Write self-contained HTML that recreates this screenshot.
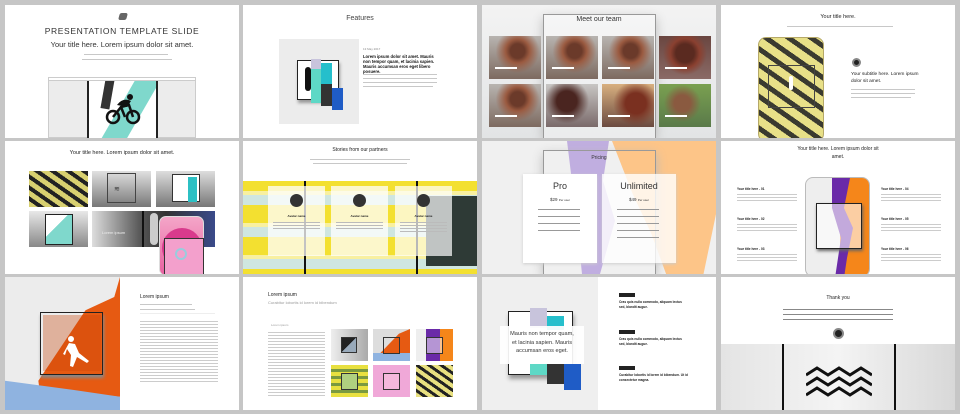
<!DOCTYPE html>
<html><head><meta charset="utf-8"><style>
*{margin:0;padding:0;box-sizing:border-box}
body{width:960px;height:414px;background:#c6c6c6;position:relative;overflow:hidden;font-family:"Liberation Sans",sans-serif;color:#222}
.s{position:absolute;width:234px;height:133px;background:#fff;overflow:hidden}
.a{position:absolute}
.t{position:absolute;white-space:nowrap}
.ln{position:absolute;height:1.5px;background:#c8c8c8}
.bl{position:absolute;height:2px;background:#222}
.ph{position:absolute;background:radial-gradient(circle at 55% 35%,#6b3a2a 0 18%,#9a5a40 30%,transparent 55%),linear-gradient(#b8b4b0,#7d6a60)}
.ph i{position:absolute;left:6px;bottom:10px;width:22px;height:2px;background:#fff}
</style></head><body>

<!-- Slide 1 -->
<div class="s" style="left:5px;top:5px">
 <div class="a" style="left:114px;top:8px;width:8px;height:7px;background:#666;border-radius:2px;transform:skew(-15deg)"></div>
 <div class="t" style="left:0;width:234px;text-align:center;top:21px;font-size:8.5px;letter-spacing:.6px;color:#333">PRESENTATION TEMPLATE SLIDE</div>
 <div class="t" style="left:0;width:234px;text-align:center;top:35px;font-size:7.5px;color:#333">Your title here. Lorem ipsum dolor sit amet.</div>
 <div class="ln" style="left:79px;width:84px;top:49px;height:1px"></div>
 <div class="ln" style="left:77px;width:90px;top:54px;height:1px"></div>
 <div class="a" style="left:43px;top:72px;width:148px;height:61px;border:1px solid #ccc;background:#ececec">
  <div class="a" style="left:0;top:0;width:146px;height:3px;background:#fff;border-bottom:1px solid #ccc"></div>
  <div class="a" style="left:38px;top:3px;width:71px;height:58px;background:#fff;border-left:2px solid #222;border-right:2px solid #222;overflow:hidden">
   <div class="a" style="left:30px;top:-20px;width:22px;height:100px;background:#7fd8cc;transform:rotate(30deg)"></div>
   <div class="a" style="left:14px;top:-2px;width:9px;height:30px;background:#333;transform:rotate(10deg)"></div>
   <svg class="a" style="left:16px;top:12px" width="36" height="34" viewBox="0 0 36 34"><circle cx="8" cy="24" r="6" fill="none" stroke="#111" stroke-width="2.5"/><circle cx="28" cy="24" r="6" fill="none" stroke="#111" stroke-width="2.5"/><path d="M8 24 L16 14 L24 12 L28 24 M16 14 L20 24" stroke="#111" stroke-width="2.5" fill="none"/><path d="M12 12 Q18 4 26 8 L22 14Z" fill="#111"/><circle cx="25" cy="4" r="3" fill="#111"/></svg>
  </div>
 </div>
</div>

<!-- Slide 2 -->
<div class="s" style="left:243px;top:5px">
 <div class="t" style="left:0;width:234px;text-align:center;top:10px;font-size:7px;color:#444">Features</div>
 <div class="a" style="left:36px;top:34px;width:80px;height:85px;background:#ececec">
  <div class="a" style="left:18px;top:21px;width:42px;height:40px;background:#fff;border:1.5px solid #222;box-shadow:1px 3px 3px #999"></div>
  <div class="a" style="left:32px;top:20px;width:10px;height:12px;background:#c8c4dc"></div>
  <div class="a" style="left:32px;top:30px;width:10px;height:34px;background:#5ed8c6"></div>
  <div class="a" style="left:42px;top:24px;width:11px;height:21px;background:#25bfcc"></div>
  <div class="a" style="left:42px;top:45px;width:11px;height:22px;background:#333"></div>
  <div class="a" style="left:53px;top:49px;width:11px;height:22px;background:#1f5cc6"></div>
  <div class="a" style="left:26px;top:28px;width:6px;height:24px;background:#111;border-radius:3px"></div>
 </div>
 <div class="t" style="left:120px;top:42px;font-size:3px;color:#888">13 May 2017</div>
 <div class="a" style="left:120px;top:49px;width:77px;font-size:4.2px;font-weight:bold;line-height:5px;color:#111">Lorem ipsum dolor sit amet. Mauris non tempor quam, et lacinia sapien. Mauris accumsan eros eget libero posuere.</div>
 <div class="ln" style="left:120px;top:69px;width:74px;height:1px"></div>
 <div class="ln" style="left:120px;top:73px;width:74px;height:1px"></div>
 <div class="ln" style="left:120px;top:77px;width:74px;height:1px"></div>
 <div class="ln" style="left:120px;top:81px;width:70px;height:1px"></div>
</div>

<!-- Slide 3 -->
<div class="s" style="left:482px;top:5px;background:linear-gradient(#f3f3f3,#e2e4e5)">
 <div class="a" style="left:61px;top:9px;width:113px;height:124px;border:1.5px solid #999;border-bottom:none;box-shadow:0 4px 10px #bbb;background:rgba(255,255,255,.3)"></div>
 <div class="t" style="left:0;width:234px;text-align:center;top:11px;font-size:7px;color:#333">Meet our team</div>
 <div class="ph" style="left:7px;top:31px;width:52px;height:43px"><i></i></div>
 <div class="ph" style="left:64px;top:31px;width:52px;height:43px"><i></i></div>
 <div class="ph" style="left:120px;top:31px;width:52px;height:43px"><i></i></div>
 <div class="ph" style="left:177px;top:31px;width:52px;height:43px;background:radial-gradient(circle at 50% 40%,#5a2a20 0 25%,#8a4030 40%,transparent 60%),linear-gradient(#6a4640,#8a6a66)"><i></i></div>
 <div class="ph" style="left:7px;top:79px;width:52px;height:43px"><i></i></div>
 <div class="ph" style="left:64px;top:79px;width:52px;height:43px;background:radial-gradient(circle at 40% 40%,#4a2520 0 25%,transparent 55%),linear-gradient(#c8c6c4,#7a6a6a)"><i></i></div>
 <div class="ph" style="left:120px;top:79px;width:52px;height:43px;background:radial-gradient(circle at 65% 45%,#7a3020 0 25%,transparent 55%),linear-gradient(#d8b080,#6a4a40)"><i></i></div>
 <div class="ph" style="left:177px;top:79px;width:52px;height:43px;background:radial-gradient(circle at 45% 45%,#8a5a40 0 22%,transparent 50%),linear-gradient(#7aa050,#5a7a4a)"><i></i></div>
</div>

<!-- Slide 4 -->
<div class="s" style="left:721px;top:5px">
 <div class="t" style="left:0;width:234px;text-align:center;top:9px;font-size:5.5px;color:#222">Your title here.</div>
 <div class="ln" style="left:66px;top:21px;width:106px;height:1px"></div>
 <div class="a" style="left:37px;top:32px;width:66px;height:105px;border:1.5px solid #b5a868;border-radius:8px;overflow:hidden;background:repeating-linear-gradient(35deg,#e8e088 0 8px,#3a3a30 8px 13px)">
  <div class="a" style="left:9px;top:27px;width:47px;height:43px;border:1px solid #444"></div>
  <div class="a" style="left:30px;top:38px;width:4px;height:14px;background:#fff;border-radius:2px"></div>
 </div>
 <div class="a" style="left:131px;top:53px;width:9px;height:9px;border-radius:50%;background:#222;border:2px solid #888;box-shadow:inset 0 0 0 1px #222"></div>
 <div class="a" style="left:130px;top:66px;width:70px;font-size:4.8px;line-height:7px;color:#222">Your subtitle here. Lorem ipsum dolor sit amet.</div>
 <div class="ln" style="left:130px;top:84px;width:64px;height:1px"></div>
 <div class="ln" style="left:130px;top:88px;width:64px;height:1px"></div>
 <div class="ln" style="left:130px;top:92px;width:60px;height:1px"></div>
</div>

<!-- Slide 5 -->
<div class="s" style="left:5px;top:141px">
 <div class="t" style="left:0;width:234px;text-align:center;top:9px;font-size:5.5px;color:#222">Your title here. Lorem ipsum dolor sit amet.</div>
 <div class="a" style="left:24px;top:30px;width:59px;height:36px;background:repeating-linear-gradient(35deg,#d8d070 0 5px,#222 5px 9px)"></div>
 <div class="a" style="left:87px;top:30px;width:59px;height:36px;background:linear-gradient(#e0e0e0,#777)"><div class="a" style="left:15px;top:2px;width:29px;height:30px;border:1px solid #444"></div><div class="t" style="left:22px;top:14px;font-size:7px;color:#333">≋</div></div>
 <div class="a" style="left:151px;top:30px;width:59px;height:36px;background:linear-gradient(#ddd,#777)"><div class="a" style="left:16px;top:3px;width:28px;height:28px;border:1px solid #333;background:#fff"></div><div class="a" style="left:32px;top:6px;width:9px;height:25px;background:#2cc0c4"></div></div>
 <div class="a" style="left:24px;top:70px;width:59px;height:36px;background:linear-gradient(#e8e8e8,#888)"><div class="a" style="left:16px;top:3px;width:28px;height:31px;border:1px solid #222;background:linear-gradient(135deg,#fff 40%,#7fd8cc 40%)"></div></div>
 <div class="a" style="left:87px;top:70px;width:123px;height:36px;background:linear-gradient(90deg,#ddd,#555 40%,#333 60%,#3a4a8a)"><div class="a" style="left:50px;top:0;width:2px;height:36px;background:#111"></div><div class="a" style="left:58px;top:2px;width:8px;height:32px;background:#ccc;border-radius:4px"></div><div class="t" style="left:10px;top:19px;font-size:4px;color:#eee">Lorem ipsum</div></div>
 <div class="a" style="left:154px;top:75px;width:45px;height:60px;border-radius:7px;background:linear-gradient(#f4a6c8,#e860a0);border:1px solid #ddd">
  <div class="a" style="left:2px;top:11px;width:40px;height:40px;border-radius:50%;background:#d83a8c"></div>
  <div class="a" style="left:4px;top:21px;width:40px;height:40px;border:1.5px solid #333;background:#f3a0cc"></div>
  <div class="a" style="left:15px;top:31px;width:12px;height:12px;border-radius:50%;border:2px solid #9cd;"></div>
 </div>
</div>

<!-- Slide 6 -->
<div class="s" style="left:243px;top:141px">
 <div class="t" style="left:0;width:234px;text-align:center;top:6px;font-size:5px;color:#222">Stories from our partners</div>
 <div class="ln" style="left:67px;top:18px;width:100px;height:1px"></div>
 <div class="ln" style="left:70px;top:22px;width:94px;height:1px"></div>
 <div class="a" style="left:0;top:40px;width:234px;height:93px;background:repeating-linear-gradient(#f3e030 0 10px,#f8f0a0 10px 14px,#cfe6e0 14px 24px,#f3e030 24px 32px)"></div>
 <div class="a" style="left:183px;top:55px;width:51px;height:70px;background:#2e3a36"></div>
 <div class="a" style="left:61px;top:40px;width:2px;height:93px;background:#111"></div>
 <div class="a" style="left:173px;top:40px;width:2px;height:93px;background:#111"></div>
 <div class="a" style="left:25px;top:45px;width:57px;height:70px;background:rgba(255,255,255,.75)"></div>
 <div class="a" style="left:88px;top:45px;width:57px;height:70px;background:rgba(255,255,255,.75)"></div>
 <div class="a" style="left:152px;top:45px;width:57px;height:70px;background:rgba(255,255,255,.7)"></div>
 <div class="a" style="left:47px;top:53px;width:13px;height:13px;border-radius:50%;background:#333"></div>
 <div class="a" style="left:110px;top:53px;width:13px;height:13px;border-radius:50%;background:#333"></div>
 <div class="a" style="left:174px;top:53px;width:13px;height:13px;border-radius:50%;background:#333"></div>
 <div class="t" style="left:25px;width:57px;text-align:center;top:73px;font-size:3px;font-weight:bold">Avatar name</div>
 <div class="t" style="left:88px;width:57px;text-align:center;top:73px;font-size:3px;font-weight:bold">Avatar name</div>
 <div class="t" style="left:152px;width:57px;text-align:center;top:73px;font-size:3px;font-weight:bold">Avatar name</div>
 <div class="ln" style="left:30px;top:81px;width:47px;height:8px;background:repeating-linear-gradient(#bbb 0 1px,transparent 1px 3px)"></div>
 <div class="ln" style="left:93px;top:81px;width:47px;height:8px;background:repeating-linear-gradient(#bbb 0 1px,transparent 1px 3px)"></div>
 <div class="ln" style="left:157px;top:81px;width:47px;height:12px;background:repeating-linear-gradient(#bbb 0 1px,transparent 1px 3px)"></div>
</div>

<!-- Slide 7 -->
<div class="s" style="left:482px;top:141px;background:#f0f0f0">
 <div class="a" style="left:130px;top:0;width:104px;height:133px;background:#fdc588;clip-path:polygon(0 0,100% 0,100% 55%,88% 100%,52% 100%,38% 70%,20% 40%)"></div>
 <div class="a" style="left:85px;top:0;width:60px;height:133px;background:#c0aee0;clip-path:polygon(0 0,70% 0,60% 30%,80% 60%,55% 100%,25% 100%,15% 55%)"></div>
 <div class="a" style="left:61px;top:9px;width:113px;height:124px;border:1.5px solid #999;border-bottom:none;box-shadow:0 4px 10px #bbb"></div>
 <div class="t" style="left:0;width:234px;text-align:center;top:14px;font-size:5px;color:#333">Pricing</div>
 <div class="a" style="left:41px;top:33px;width:74px;height:89px;background:#fff;box-shadow:0 1px 3px #ccc">
  <div class="t" style="left:0;width:74px;text-align:center;top:7px;font-size:9px;color:#333">Pro</div>
  <div class="t" style="left:0;width:74px;text-align:center;top:23px;font-size:4.5px;color:#333">$29 <span style="font-size:3px">Per user</span></div>
  <div class="a" style="left:15px;top:35px;width:42px;height:26px;background:repeating-linear-gradient(#999 0 1px,transparent 1px 7px)"></div>
 </div>
 <div class="a" style="left:120px;top:33px;width:74px;height:89px;background:rgba(255,255,255,.8);box-shadow:0 1px 3px #ccc">
  <div class="t" style="left:0;width:74px;text-align:center;top:7px;font-size:9px;color:#333">Unlimited</div>
  <div class="t" style="left:0;width:74px;text-align:center;top:23px;font-size:4.5px;color:#333">$49 <span style="font-size:3px">Per user</span></div>
  <div class="a" style="left:15px;top:35px;width:42px;height:30px;background:repeating-linear-gradient(#999 0 1px,transparent 1px 7px)"></div>
 </div>
</div>

<!-- Slide 8 -->
<div class="s" style="left:721px;top:141px">
 <div class="a" style="left:70px;top:4px;width:94px;text-align:center;font-size:5px;line-height:8px;color:#222">Your title here. Lorem ipsum dolor sit amet.</div>
 <div class="a" style="left:84px;top:36px;width:65px;height:100px;border:1.5px solid #bbb;border-radius:8px;overflow:hidden;background:#eee">
  <div class="a" style="left:34px;top:0;width:31px;height:100px;background:#f5861a"></div>
  <div class="a" style="left:20px;top:0;width:30px;height:100px;background:#6a2aa8;clip-path:polygon(20% 0,80% 0,60% 30%,90% 50%,70% 80%,60% 100%,30% 100%,50% 60%,20% 30%)"></div>
  <div class="a" style="left:10px;top:25px;width:46px;height:46px;border:1.5px solid #222;box-shadow:1px 2px 3px #666;background:rgba(255,255,255,.6)"></div>
 </div>
 <div class="t" style="left:16px;top:46px;font-size:3.2px;font-weight:bold">Your title here - 01</div>
 <div class="t" style="left:16px;top:76px;font-size:3.2px;font-weight:bold">Your title here - 02</div>
 <div class="t" style="left:16px;top:106px;font-size:3.2px;font-weight:bold">Your title here - 03</div>
 <div class="t" style="left:160px;top:46px;font-size:3.2px;font-weight:bold">Your title here - 04</div>
 <div class="t" style="left:160px;top:76px;font-size:3.2px;font-weight:bold">Your title here - 05</div>
 <div class="t" style="left:160px;top:106px;font-size:3.2px;font-weight:bold">Your title here - 06</div>
 <div class="a" style="left:16px;top:53px;width:60px;height:8px;background:repeating-linear-gradient(#ccc 0 1px,transparent 1px 3px)"></div>
 <div class="a" style="left:16px;top:83px;width:60px;height:8px;background:repeating-linear-gradient(#ccc 0 1px,transparent 1px 3px)"></div>
 <div class="a" style="left:16px;top:113px;width:60px;height:8px;background:repeating-linear-gradient(#ccc 0 1px,transparent 1px 3px)"></div>
 <div class="a" style="left:160px;top:53px;width:60px;height:8px;background:repeating-linear-gradient(#ccc 0 1px,transparent 1px 3px)"></div>
 <div class="a" style="left:160px;top:83px;width:60px;height:8px;background:repeating-linear-gradient(#ccc 0 1px,transparent 1px 3px)"></div>
 <div class="a" style="left:160px;top:113px;width:60px;height:8px;background:repeating-linear-gradient(#ccc 0 1px,transparent 1px 3px)"></div>
</div>

<!-- Slide 9 -->
<div class="s" style="left:5px;top:277px">
 <div class="a" style="left:0;top:0;width:115px;height:133px;background:#ececec"></div>
 <div class="a" style="left:0;top:0;width:115px;height:133px;background:#e65a12;clip-path:polygon(100% 0,100% 90%,30% 85%,29% 78%,70% 25%,95% 15%)"></div>
 <div class="a" style="left:0;top:0;width:115px;height:133px;background:#8fb3e0;clip-path:polygon(0 78%,60% 85%,100% 90%,100% 100%,0 100%)"></div>
 <div class="a" style="left:35px;top:35px;width:63px;height:63px;border:1.5px solid #222;box-shadow:1px 3px 3px #888"></div>
 <div class="a" style="left:38px;top:38px;width:58px;height:56px;background:rgba(200,70,10,.35)"></div>
 <svg class="a" style="left:58px;top:58px" width="30" height="35" viewBox="0 0 30 35"><circle cx="8" cy="4" r="3" fill="#fff"/><path d="M6 8 L12 9 L16 18 L26 26 L24 28 L14 22 L10 32 L7 31 L8 20 L4 14 L2 20 L0 19 Z" fill="#fff"/></svg>
 <div class="t" style="left:135px;top:17px;font-size:5px;color:#222">Lorem ipsum</div>
 <div class="ln" style="left:135px;top:27px;width:52px;height:1px"></div>
 <div class="ln" style="left:135px;top:32px;width:55px;height:1px"></div>
 <div class="ln" style="left:135px;top:36px;width:75px;height:1px;background:#eee"></div>
 <div class="a" style="left:135px;top:44px;width:78px;height:62px;background:repeating-linear-gradient(#ccc 0 1px,transparent 1px 3px)"></div>
</div>

<!-- Slide 10 -->
<div class="s" style="left:243px;top:277px">
 <div class="t" style="left:25px;top:15px;font-size:5px;color:#222">Lorem ipsum</div>
 <div class="t" style="left:25px;top:23px;font-size:4px;color:#999">Curabitur lobortis id lorem id bibendum</div>
 <div class="t" style="left:28px;top:46px;font-size:3px;color:#999">Lorem ipsum</div>
 <div class="a" style="left:25px;top:55px;width:57px;height:66px;background:repeating-linear-gradient(#ccc 0 1px,transparent 1px 3px)"></div>
 <div class="a" style="left:88px;top:52px;width:37px;height:32px;background:linear-gradient(90deg,#eee,#aaa)"><div class="a" style="left:10px;top:8px;width:16px;height:16px;border:1px solid #333;background:linear-gradient(135deg,#222 50%,#9ab 50%)"></div></div>
 <div class="a" style="left:130px;top:52px;width:37px;height:32px;background:#ddd"><div class="a" style="left:0;top:0;width:37px;height:24px;background:#e65a12;clip-path:polygon(100% 0,100% 100%,20% 100%,70% 20%)"></div><div class="a" style="left:0;top:24px;width:37px;height:8px;background:#8fb3e0"></div><div class="a" style="left:10px;top:8px;width:17px;height:17px;border:1px solid #333"></div></div>
 <div class="a" style="left:173px;top:52px;width:37px;height:32px;background:#eee"><div class="a" style="left:18px;top:0;width:19px;height:32px;background:#f5861a"></div><div class="a" style="left:10px;top:0;width:14px;height:32px;background:#6a2aa8"></div><div class="a" style="left:10px;top:8px;width:17px;height:17px;border:1px solid #333;background:rgba(255,255,255,.5)"></div></div>
 <div class="a" style="left:88px;top:88px;width:37px;height:32px;background:repeating-linear-gradient(#e8e040 0 4px,#7a9a40 4px 7px)"><div class="a" style="left:10px;top:8px;width:17px;height:17px;border:1px solid #333;background:#b0d080"></div></div>
 <div class="a" style="left:130px;top:88px;width:37px;height:32px;background:#f0a8d8"><div class="a" style="left:10px;top:8px;width:17px;height:17px;border:1px solid #333;background:#f4b8dc"></div></div>
 <div class="a" style="left:173px;top:88px;width:37px;height:32px;background:repeating-linear-gradient(35deg,#e8e080 0 4px,#222 4px 7px)"></div>
</div>

<!-- Slide 11 -->
<div class="s" style="left:482px;top:277px">
 <div class="a" style="left:0;top:0;width:116px;height:133px;background:#efefef"></div>
 <div class="a" style="left:26px;top:34px;width:65px;height:64px;border:1.5px solid #222;background:#fff;box-shadow:1px 4px 4px #999"></div>
 <div class="a" style="left:48px;top:31px;width:17px;height:20px;background:#c8c4dc"></div>
 <div class="a" style="left:65px;top:39px;width:17px;height:14px;background:#25bfcc"></div>
 <div class="a" style="left:48px;top:87px;width:17px;height:11px;background:#5ed8c6"></div>
 <div class="a" style="left:65px;top:87px;width:17px;height:20px;background:#333"></div>
 <div class="a" style="left:82px;top:87px;width:17px;height:26px;background:#1f5cc6"></div>
 <div class="a" style="left:18px;top:49px;width:84px;height:38px;background:rgba(255,255,255,.92);text-align:center;font-size:5.6px;line-height:8.5px;color:#333;padding-top:4px">Mauris non tempor quam,<br>et lacinia sapien. Mauris<br>accumsan eros eget.</div>
 <div class="a" style="left:137px;top:16px;width:16px;height:4px;background:#222"></div>
 <div class="a" style="left:137px;top:23px;width:70px;font-size:3.2px;font-weight:bold;line-height:5px">Cras quis nulla commodo, aliquam lectus sed, blandit augue.</div>
 <div class="a" style="left:137px;top:53px;width:16px;height:4px;background:#222"></div>
 <div class="a" style="left:137px;top:60px;width:70px;font-size:3.2px;font-weight:bold;line-height:5px">Cras quis nulla commodo, aliquam lectus sed, blandit augue.</div>
 <div class="a" style="left:137px;top:89px;width:16px;height:4px;background:#222"></div>
 <div class="a" style="left:137px;top:96px;width:72px;font-size:3.2px;font-weight:bold;line-height:5px">Curabitur lobortis id lorem id bibendum. Ut id consectetur magna.</div>
</div>

<!-- Slide 12 -->
<div class="s" style="left:721px;top:277px">
 <div class="t" style="left:0;width:234px;text-align:center;top:18px;font-size:5px;color:#222">Thank you</div>
 <div class="a" style="left:62px;top:32px;width:110px;height:14px;background:repeating-linear-gradient(#888 0 1px,transparent 1px 5px)"></div>
 <div class="a" style="left:112px;top:51px;width:11px;height:11px;border-radius:50%;background:#222;border:2px solid #888;box-shadow:inset 0 0 0 1.5px #222"></div>
 <div class="a" style="left:0;top:67px;width:234px;height:66px;background:linear-gradient(90deg,#e4e4e4,#f4f4f4 50%,#d8d8d8)"></div>
 <div class="a" style="left:61px;top:67px;width:2px;height:66px;background:#111"></div>
 <div class="a" style="left:173px;top:67px;width:2px;height:66px;background:#111"></div>
 <svg class="a" style="left:85px;top:88px" width="66" height="36" viewBox="0 0 66 36"><path d="M0 10 L11 3 L22 10 L33 3 L44 10 L55 3 L66 10 M0 20 L11 13 L22 20 L33 13 L44 20 L55 13 L66 20 M0 30 L11 23 L22 30 L33 23 L44 30 L55 23 L66 30" stroke="#111" stroke-width="3" fill="none"/></svg>
</div>

</body></html>
